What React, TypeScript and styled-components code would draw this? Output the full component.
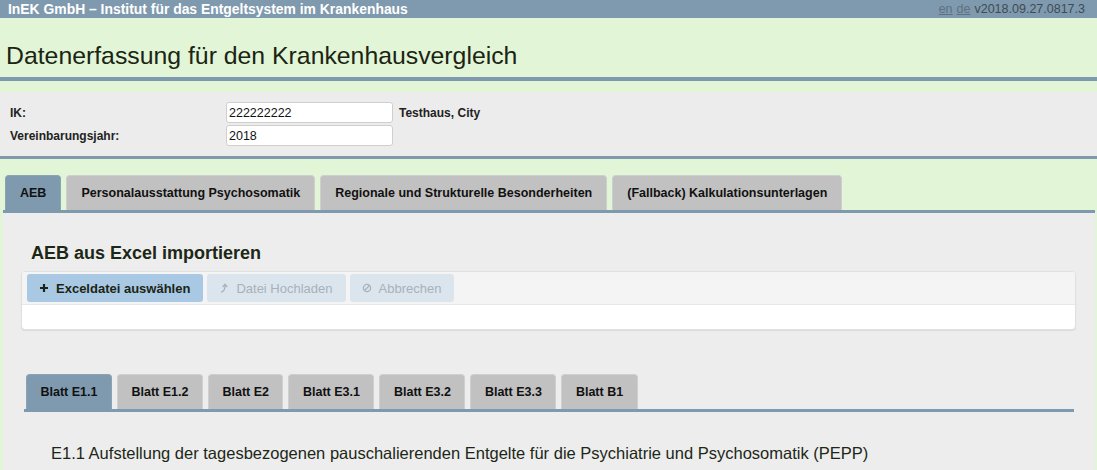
import React from "react";
import styled, { createGlobalStyle } from "styled-components";

const Global = createGlobalStyle`
  html, body { margin: 0; padding: 0; }
  body {
    background: #e2f5d6;
    font-family: "Liberation Sans", Arial, sans-serif;
    color: #1f2a1a;
  }
`;

const BLUE = "#7f9aae";

const TopBar = styled.header`
  height: 18px;
  background: ${BLUE};
  display: flex;
  align-items: center;
  justify-content: space-between;
  padding: 0 12px 0 8px;
`;

const Brand = styled.span`
  color: #fff;
  font-weight: bold;
  font-size: 13.9px;
`;

const Meta = styled.span`
  color: #3f4a52;
  font-size: 12.5px;
  display: flex;
  gap: 4px;
`;

const LangLink = styled.a`
  color: #5f7180;
  text-decoration: underline;
`;

const TitleBand = styled.div`
  height: 63px;
  display: flex;
  align-items: flex-end;
  padding: 0 6px 7px;
  box-sizing: border-box;
  border-bottom: 4px solid ${BLUE};
  margin-bottom: 11px;
`;

const Title = styled.h1`
  margin: 0;
  font-size: 24.8px;
  line-height: 28px;
  font-weight: normal;
  color: #1a2414;
`;

const FormSection = styled.section`
  background: #ececec;
  border-bottom: 3px solid ${BLUE};
  padding: 10px;
  display: grid;
  grid-template-columns: 210px 167px auto;
  column-gap: 6px;
  row-gap: 2px;
  align-items: center;
`;

const Label = styled.label`
  font-size: 12px;
  font-weight: bold;
  color: #222;
`;

const Input = styled.input`
  box-sizing: border-box;
  height: 21px;
  width: 167px;
  border: 1px solid #cfcfcf;
  border-radius: 3px;
  background: #fff;
  font-family: inherit;
  font-size: 12.5px;
  padding: 0 2px;
  color: #111;
`;

const Extra = styled.span`
  font-size: 12px;
  font-weight: bold;
  color: #222;
`;

const TabRow = styled.nav<{ $inset?: boolean }>`
  display: flex;
  gap: 5px;
  padding-left: ${(p) => (p.$inset ? "2px" : "5px")};
  margin: ${(p) => (p.$inset ? "44px 21px 0 21px" : "16px 0 0 0")};
  border-bottom: ${(p) => (p.$inset ? `3px solid ${BLUE}` : "none")};
`;

const Tab = styled.div<{ $active?: boolean; $pad: number }>`
  height: 35px;
  box-sizing: border-box;
  padding: 0 ${(p) => p.$pad}px;
  display: flex;
  align-items: center;
  background: ${(p) => (p.$active ? BLUE : "#c1c1c1")};
  border: 1px solid ${(p) => (p.$active ? "#8aa3b5" : "#cfcfcf")};
  border-bottom: none;
  border-radius: 4px 4px 0 0;
  font-size: 12.5px;
  font-weight: bold;
  color: #111;
`;

const Content = styled.main`
  margin: 0 2px 0 3px;
  border-top: 3px solid ${BLUE};
  background: #ededed;
  padding: 30px 0 20px;
  min-height: 300px;
`;

const SectionHeading = styled.h2`
  margin: 0 0 7px 28px;
  font-size: 18px;
  line-height: 21px;
  font-weight: bold;
  color: #1c2716;
`;

const Panel = styled.div`
  margin: 0 19px 0 18px;
  border: 1px solid #e0e0e0;
  border-radius: 4px;
  background: #fff;
  overflow: hidden;
  box-shadow: 0 1px 1px rgba(0, 0, 0, 0.08);
`;

const Toolbar = styled.div`
  background: #f4f4f4;
  height: 33px;
  box-sizing: border-box;
  padding: 2px 5px;
  display: flex;
  gap: 4px;
  border-bottom: 1px solid #e8e8e8;
`;

const Button = styled.button<{ $primary?: boolean }>`
  height: 28px;
  box-sizing: border-box;
  border: none;
  border-radius: 3px;
  padding: 0 13px 0 12px;
  display: flex;
  align-items: center;
  gap: 7px;
  font-family: inherit;
  font-size: 13px;
  font-weight: ${(p) => (p.$primary ? "bold" : "normal")};
  background: ${(p) => (p.$primary ? "#a8c8e4" : "#dbe5ee")};
  color: ${(p) => (p.$primary ? "#1c2414" : "#a9b1b8")};
`;

const PanelBody = styled.div`
  height: 24px;
`;

const SheetHeading = styled.h3`
  margin: 32px 0 0 48px;
  font-size: 16.5px;
  line-height: 19px;
  font-weight: normal;
  color: #1c2716;
`;

const PlusIcon = () => (
  <svg width="10" height="10" viewBox="0 0 10 10">
    <path d="M5 1v8M1 5h8" stroke="#1c2414" strokeWidth="2.2" />
  </svg>
);

const UploadIcon = () => (
  <svg width="10" height="10" viewBox="0 0 10 10" fill="none">
    <path d="M2 9 C5 9 6 6 6 2" stroke="#a9b1b8" strokeWidth="1.3" />
    <path d="M3.8 4 L6 1.3 L8.2 4" stroke="#a9b1b8" strokeWidth="1.3" />
  </svg>
);

const BanIcon = () => (
  <svg width="10" height="10" viewBox="0 0 10 10" fill="none">
    <circle cx="5" cy="5" r="3.6" stroke="#a9b1b8" strokeWidth="1.3" />
    <path d="M2.5 7.5L7.5 2.5" stroke="#a9b1b8" strokeWidth="1.3" />
  </svg>
);

const mainTabs = [
  "AEB",
  "Personalausstattung Psychosomatik",
  "Regionale und Strukturelle Besonderheiten",
  "(Fallback) Kalkulationsunterlagen",
];

const sheets = ["Blatt E1.1", "Blatt E1.2", "Blatt E2", "Blatt E3.1", "Blatt E3.2", "Blatt E3.3", "Blatt B1"];

export default function App() {
  return (
    <>
      <Global />
      <TopBar>
        <Brand>InEK GmbH – Institut für das Entgeltsystem im Krankenhaus</Brand>
        <Meta>
          <LangLink>en</LangLink>
          <LangLink>de</LangLink>
          <span>v2018.09.27.0817.3</span>
        </Meta>
      </TopBar>
      <TitleBand>
        <Title>Datenerfassung für den Krankenhausvergleich</Title>
      </TitleBand>
      <FormSection>
        <Label>IK:</Label>
        <Input defaultValue="222222222" />
        <Extra>Testhaus, City</Extra>
        <Label>Vereinbarungsjahr:</Label>
        <Input defaultValue="2018" />
        <span />
      </FormSection>
      <TabRow>
        {mainTabs.map((t, i) => (
          <Tab key={t} $active={i === 0} $pad={14}>
            {t}
          </Tab>
        ))}
      </TabRow>
      <Content>
        <SectionHeading>AEB aus Excel importieren</SectionHeading>
        <Panel>
          <Toolbar>
            <Button $primary>
              <PlusIcon />
              Exceldatei auswählen
            </Button>
            <Button>
              <UploadIcon />
              Datei Hochladen
            </Button>
            <Button>
              <BanIcon />
              Abbrechen
            </Button>
          </Toolbar>
          <PanelBody />
        </Panel>
        <TabRow $inset>
          {sheets.map((s, i) => (
            <Tab key={s} $active={i === 0} $pad={13.5}>
              {s}
            </Tab>
          ))}
        </TabRow>
        <SheetHeading>
          E1.1 Aufstellung der tagesbezogenen pauschalierenden Entgelte für die Psychiatrie und Psychosomatik (PEPP)
        </SheetHeading>
      </Content>
    </>
  );
}
